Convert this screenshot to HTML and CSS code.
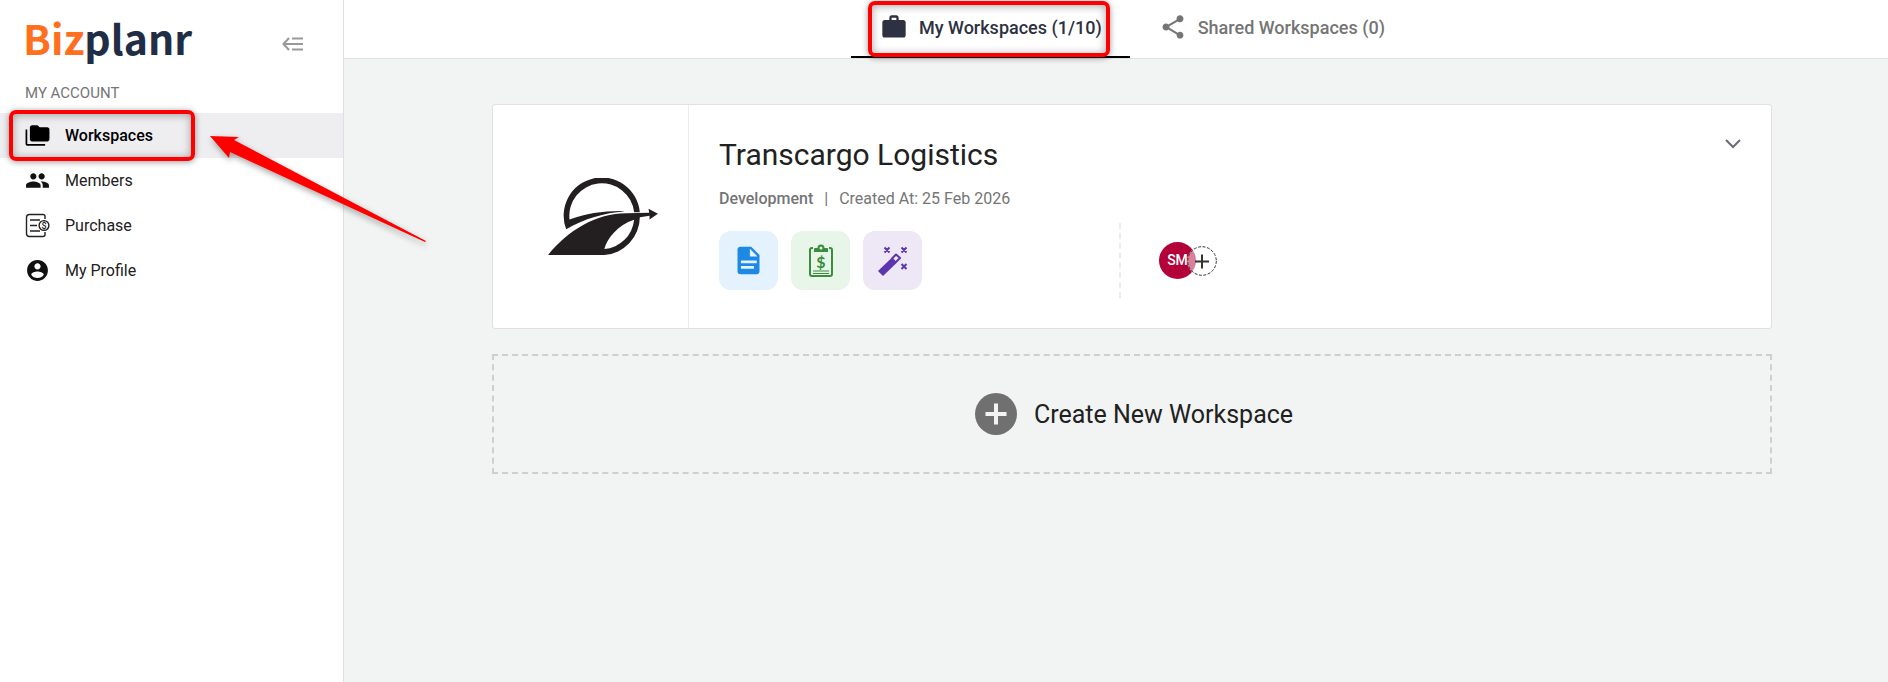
FILE: index.html
```html
<!DOCTYPE html>
<html lang="en">
<head>
    <meta charset="UTF-8">
    <meta name="viewport" content="width=device-width, initial-scale=1.0">
    <title>Bizplanr - My Workspaces</title>
    <link rel="stylesheet" href="styles.css">
</head>
<body>
    <div class="layout">
        <aside class="sidebar">
            <div class="brand-row">
                <a href="#" class="brand"><span>Biz</span>planr</a>
                <button type="button" class="icon-btn" aria-label="Collapse menu">
                    <svg width="22" height="14" viewBox="0 0 22 14" fill="none" stroke="#999" stroke-width="2">
                        <path d="M7 1 1.500 7 7 13M1.500 7H21M10 1.500H21M10 12.500H21"/>
                    </svg>
                </button>
            </div>
            <h2 class="section-title">MY ACCOUNT</h2>
            <nav class="nav">
                <a href="#" class="nav-item active">
                    <svg width="25" height="25" viewBox="1 0 22 23"><path d="M2.600 6H1v13c0 1.100.9 2 2 2h16v-1.600H2.600z"/><path d="M21 4h-7l-2-2H7c-1.100 0-2 .9-2 2v11c0 1.100.9 2 2 2h14c1.100 0 2-.9 2-2V6c0-1.100-.9-2-2-2z"/></svg>
                    Workspaces
                    <span class="highlight"></span>
                </a>
                <a href="#" class="nav-item">
                    <svg width="25" height="25" viewBox="0 0 24 24"><path d="M16 11c1.660 0 2.990-1.340 2.990-3S17.660 5 16 5s-3 1.340-3 3 1.340 3 3 3zm-8 0c1.660 0 2.990-1.340 2.990-3S9.660 5 8 5 5 6.340 5 8s1.340 3 3 3zm0 2c-2.330 0-7 1.170-7 3.500V19h14v-2.500c0-2.330-4.670-3.500-7-3.500zm8 0c-.29 0-.62.02-.97.05 1.160.84 1.970 1.970 1.970 3.450V19h6v-2.500c0-2.330-4.670-3.500-7-3.500z"/></svg>
                    Members
                </a>
                <a href="#" class="nav-item">
                    <svg width="25" height="25" viewBox="0 0 25 25" fill="none" stroke="#222" stroke-width="1.400">
                        <path d="M20 6V3.500Q20 1.500 18 1.500H4.500Q1.500 1.500 1.500 4.500V20.500Q1.500 23.500 4.500 23.500H18Q20 23.500 20 21.500V19M5 7H15M5 12.500H12M5 18H15"/>
                        <circle cx="19" cy="12.500" r="4.900"/>
                        <text x="19" y="15.700" class="coin-sign">$</text>
                    </svg>
                    Purchase
                </a>
                <a href="#" class="nav-item">
                    <svg width="25" height="25" viewBox="0 0 24 24"><path d="M12 2C6.480 2 2 6.480 2 12s4.480 10 10 10 10-4.480 10-10S17.520 2 12 2zm0 3c1.660 0 3 1.340 3 3s-1.340 3-3 3-3-1.340-3-3 1.340-3 3-3zm0 14.200c-2.500 0-4.710-1.280-6-3.220.03-1.990 4-3.080 6-3.080 1.990 0 5.970 1.090 6 3.080-1.290 1.940-3.500 3.220-6 3.220z"/></svg>
                    My Profile
                </a>
            </nav>
        </aside>

        <main class="main">
            <header class="tabs">
                <button type="button" class="tab active">
                    <svg width="28" height="28" viewBox="0 0 24 24"><path d="M20 6h-4V4c0-1.110-.89-2-2-2h-4c-1.110 0-2 .89-2 2v2H4c-1.110 0-2 .89-2 2v11c0 1.110.89 2 2 2h16c1.110 0 2-.89 2-2V8c0-1.110-.89-2-2-2zm-6 0h-4V4h4v2z"/></svg>
                    My Workspaces (1/10)
                    <span class="highlight"></span>
                </button>
                <button type="button" class="tab">
                    <svg width="28" height="28" viewBox="0 0 24 24"><path d="M18 16.080c-.76 0-1.440.3-1.960.77L8.910 12.700c.05-.23.09-.46.09-.7s-.04-.47-.09-.7l7.050-4.110c.54.5 1.250.81 2.040.81 1.660 0 3-1.340 3-3s-1.340-3-3-3-3 1.340-3 3c0 .24.04.47.09.7L8.040 9.810C7.500 9.310 6.790 9 6 9c-1.660 0-3 1.340-3 3s1.340 3 3 3c.79 0 1.500-.31 2.040-.81l7.120 4.160c-.05.21-.08.43-.08.65 0 1.610 1.310 2.920 2.920 2.920 1.610 0 2.920-1.310 2.920-2.920s-1.310-2.920-2.920-2.920z"/></svg>
                    Shared Workspaces (0)
                </button>
            </header>

            <div class="content">
                <section class="card">
                    <div class="card-logo">
                        <svg width="110" height="77" viewBox="204 264 328 230" fill="#231f20">
                            <path d="M258 417A114 114 0 1 1 478 366L461 366A97 97 0 1 0 268 388C318 370 370 362 432 363C372 369 312 384 258 417Z"/>
                            <path fill-rule="evenodd" d="M204 494C262 420 350 368 440 369L506 368L504 356L532 371L507 388V377L478 381A114 114 0 0 1 372 494ZM372 476C380 446 412 404 461 389A97 97 0 0 1 372 476Z"/>
                        </svg>
                    </div>
                    <div class="card-body">
                        <div class="card-head">
                            <h1>Transcargo Logistics</h1>
                            <button type="button" class="icon-btn" aria-label="Expand workspace">
                                <svg width="16" height="16" viewBox="0 0 16 16" fill="none" stroke="#6b6b78" stroke-width="2"><path d="M1 3 8 10 15 3"/></svg>
                            </button>
                        </div>
                        <p class="meta"><strong>Development</strong><span>|</span>Created At: 25 Feb 2026</p>
                        <div class="card-row">
                            <div class="apps">
                                <button type="button" class="app blue" aria-label="Business plan">
                                    <svg width="33" height="33" viewBox="0 0 24 24" fill="#1e88e5"><path d="M14 2H6c-1.100 0-2 .9-2 2v16c0 1.100.9 2 2 2h12c1.100 0 2-.9 2-2V8l-6-6zm2 16H6.500v-2H16v2zm2-4H6.500v-2H18v2zm-5-5V3.500L18.500 9H13z"/></svg>
                                </button>
                                <button type="button" class="app green" aria-label="Financials">
                                    <svg width="26" height="34" viewBox="0 0 26 34" fill="none" stroke="#388e3c" stroke-width="2">
                                        <path d="M5 4H4Q2 4 2 6V30Q2 32 4 32H22Q24 32 24 30V6Q24 4 22 4H21"/>
                                        <path d="M5 27H21M5 29.500H21" stroke-width="1"/>
                                        <path d="M6 8V5Q6 4 7 4H10A3 3 0 0 1 16 4H19Q20 4 20 5V8Z" fill="#388e3c" stroke="none"/>
                                        <circle cx="13" cy="4" r="2.500" fill="#e8f5e9"/>
                                        <text x="13" y="24" class="clip-sign">$</text>
                                    </svg>
                                </button>
                                <button type="button" class="app purple" aria-label="AI assistant">
                                    <svg width="30" height="30" viewBox="0 0 30 30" fill="none" stroke="#5e35b1" stroke-width="2">
                                        <path d="M0 25 13 12.500 18 17.500 5 30Z" fill="#5e35b1" stroke="none"/>
                                        <path d="M14 12.500 18 8.500 22 12 17.500 16.500Z" stroke-linejoin="round"/>
                                        <path d="M6.500 1.500 11.500 6.500M11.500 1.500 6.500 6.500M23.500 1.500 28.500 6.500M28.500 1.500 23.500 6.500M23.500 18 28.500 23M28.500 18 23.500 23"/>
                                    </svg>
                                </button>
                            </div>
                            <div class="people">
                                <span class="avatar">SM</span>
                                <button type="button" class="add-person" aria-label="Add member">
                                    <svg width="30" height="30" viewBox="0 0 30 30" fill="none" stroke="#333">
                                        <circle cx="15" cy="15" r="14.300" stroke-dasharray="3 1.500"/>
                                        <path d="M8 15.500H22M15 8.500V22.500" stroke-width="2"/>
                                    </svg>
                                </button>
                            </div>
                        </div>
                    </div>
                </section>

                <button type="button" class="create">
                    <svg width="42" height="42" viewBox="0 0 42 42"><circle cx="21" cy="21" r="21" fill="#707070"/><path d="M21 10.500V31.500M10.500 21H31.500" stroke="#f1f4f3" stroke-width="4"/></svg>
                    Create New Workspace
                </button>
            </div>
        </main>
    </div>

    <!-- pointer to the Workspaces entry -->
    <svg class="arrow" width="226" height="116" viewBox="0 0 226 116"><path d="M5 6 34 7 29 10 221 111 220 112 25 22 24 28Z" fill="#ff0000"/></svg>
</body>
</html>
```
FILE: styles.css
```css
* {
    box-sizing: border-box;
}

body {
    font-family: Roboto, "Liberation Sans", sans-serif;
    font-size: 16px;
    color: #212121;
    background: #f1f4f3;
    margin: 0;
}

button {
    font-family: inherit;
    border: none;
    background: none;
    padding: 0;
    cursor: pointer;
}

svg {
    display: block;
    flex-shrink: 0;
}

h1, h2, p {
    margin: 0;
}

.layout {
    display: flex;
    min-height: 100vh;
}

/* Sidebar */
.sidebar {
    width: 344px;
    flex-shrink: 0;
    background: #fff;
    border-right: 1px solid #dfe0e0;
}

.brand-row {
    display: flex;
    justify-content: space-between;
    align-items: center;
    height: 80px;
    padding: 7px 39px 0 23px;
}

.brand {
    font-family: "Noto Sans CJK JP", "Noto Sans", sans-serif;
    font-size: 41px;
    line-height: 60px;
    padding-bottom: 13px;
    font-weight: 700;
    color: #212d45;
    text-decoration: none;
}

.brand span {
    color: #ff6f20;
}

.section-title {
    padding: 0 25px;
    margin: 3px 0 10px;
    font-size: 15px;
    line-height: 20px;
    font-weight: 400;
    color: #757575;
}

.nav-item {
    position: relative;
    display: flex;
    align-items: center;
    gap: 15px;
    height: 45px;
    padding: 0 25px;
    color: #212121;
    fill: #111;
    text-decoration: none;
}

.nav-item.active {
    background: #eeeef0;
    color: #000;
    fill: #000;
    font-weight: 500;
}

.coin-sign {
    font-size: 9px;
    font-weight: 500;
    text-anchor: middle;
    fill: #222;
    stroke: none;
}

/* Red marker box around an item */
.highlight {
    position: absolute;
    border: 4px solid #ff0000;
    border-radius: 7px;
    box-shadow: 0 1px 6px rgba(0, 0, 0, 0.4), inset 0 1px 8px rgba(0, 0, 0, 0.35);
}

.nav-item .highlight {
    left: 9px;
    top: -3px;
    width: 186px;
    height: 51px;
}

.tab .highlight {
    inset: 1px 20px -1px 17px;
}

.arrow {
    position: absolute;
    left: 205px;
    top: 130px;
    filter: drop-shadow(1px 3px 3px rgba(0, 0, 0, 0.35));
}

/* Main area */
.main {
    flex: 1;
    min-width: 0;
}

.tabs {
    display: flex;
    justify-content: center;
    height: 59px;
    padding-left: 32px;
    background: #fff;
    border-bottom: 1px solid #dfe2e1;
}

.tab {
    position: relative;
    display: flex;
    align-items: center;
    gap: 11px;
    padding: 0 28px 4px 29px;
    font-size: 18px;
    font-weight: 500;
    color: #757575;
    fill: #757575;
}

.tab.active {
    color: #2d3142;
    fill: #2d3142;
    border-bottom: 2px solid #000;
    padding-bottom: 2px;
}

.content {
    max-width: 1312px;
    margin: 0 auto;
    padding: 45px 0 0 32px;
}

.card {
    display: flex;
    background: #fff;
    border: 1px solid #dfe2e1;
    border-radius: 3px;
}

.card-logo {
    display: flex;
    align-items: center;
    justify-content: center;
    width: 196px;
    padding-left: 24px;
    border-right: 1px solid #e9edf3;
}

.card-body {
    flex: 1;
    padding: 32px 30px 30px;
}

.card-head {
    display: flex;
    justify-content: space-between;
    align-items: flex-start;
}

h1 {
    font-size: 30px;
    line-height: 36px;
    font-weight: 400;
}

.meta {
    margin: 14px 0 12px;
    line-height: 24px;
    color: #757575;
}

.meta strong {
    font-weight: 500;
}

.meta span {
    margin: 0 11px;
}

.card-row {
    display: flex;
}

.apps {
    display: flex;
    align-items: center;
    gap: 13px;
    width: 400px;
}

.app {
    display: flex;
    align-items: center;
    justify-content: center;
    width: 59px;
    height: 59px;
    border-radius: 12px;
}

.blue {
    background: #e3f2fd;
}

.green {
    background: #e8f5e9;
}

.purple {
    background: #ede7f6;
}

.clip-sign {
    font-family: Lato, sans-serif;
    font-size: 16px;
    font-weight: 700;
    text-anchor: middle;
    fill: #388e3c;
    stroke: none;
}

.people {
    display: flex;
    align-items: center;
    height: 75px;
    padding-left: 38px;
    border-left: 2px dashed #e9edf3;
}

.avatar {
    width: 37px;
    height: 37px;
    border-radius: 50%;
    background: #b40038;
    color: #fff;
    font-size: 14px;
    line-height: 37px;
    font-weight: 500;
    text-align: center;
}

.add-person {
    margin-left: -9px;
    border-radius: 50%;
    background: rgba(255, 255, 255, 0.5);
}

.create {
    display: flex;
    align-items: center;
    justify-content: center;
    gap: 17px;
    width: 100%;
    height: 120px;
    padding-left: 4px;
    margin-top: 25px;
    border: 2px dashed #cdd0cf;
    font-size: 25px;
    color: #212121;
}
```
